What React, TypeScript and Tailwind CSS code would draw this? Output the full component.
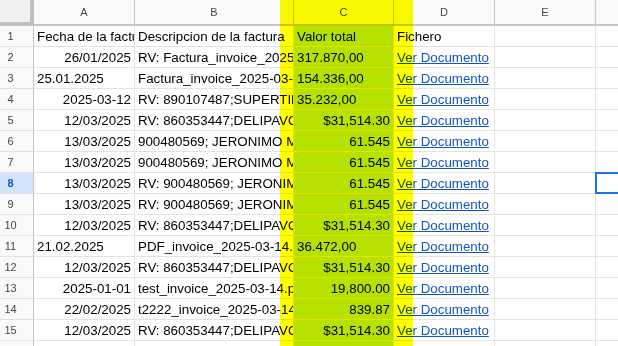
import React from "react";

type Align = "l" | "r";
type Row = { a: [string, Align]; b: string; c: [string, Align] };

const rows: Row[] = [
  { a: ["26/01/2025", "r"], b: "RV: Factura_invoice_2025-03-14.pdf", c: ["317.870,00", "l"] },
  { a: ["25.01.2025", "l"], b: "Factura_invoice_2025-03-14.pdf", c: ["154.336,00", "l"] },
  { a: ["2025-03-12", "r"], b: "RV: 890107487;SUPERTIENDAS Y DROGUERIAS", c: ["35.232,00", "l"] },
  { a: ["12/03/2025", "r"], b: "RV: 860353447;DELIPAVO S.A.S.", c: ["$31,514.30", "r"] },
  { a: ["13/03/2025", "r"], b: "900480569; JERONIMO MARTINS", c: ["61.545", "r"] },
  { a: ["13/03/2025", "r"], b: "900480569; JERONIMO MARTINS", c: ["61.545", "r"] },
  { a: ["13/03/2025", "r"], b: "RV: 900480569; JERONIMO MARTINS", c: ["61.545", "r"] },
  { a: ["13/03/2025", "r"], b: "RV: 900480569; JERONIMO MARTINS", c: ["61.545", "r"] },
  { a: ["12/03/2025", "r"], b: "RV: 860353447;DELIPAVO S.A.S.", c: ["$31,514.30", "r"] },
  { a: ["21.02.2025", "l"], b: "PDF_invoice_2025-03-14.pdf", c: ["36.472,00", "l"] },
  { a: ["12/03/2025", "r"], b: "RV: 860353447;DELIPAVO S.A.S.", c: ["$31,514.30", "r"] },
  { a: ["2025-01-01", "r"], b: "test_invoice_2025-03-14.pdf", c: ["19,800.00", "r"] },
  { a: ["22/02/2025", "r"], b: "t2222_invoice_2025-03-14.pdf", c: ["839.87", "r"] },
  { a: ["12/03/2025", "r"], b: "RV: 860353447;DELIPAVO S.A.S.", c: ["$31,514.30", "r"] },
];

const cellBase =
  "h-[21px] border-b border-r border-[#e2e3e3] flex items-end pb-[2px] px-[3px] overflow-hidden whitespace-nowrap leading-[15px] shrink-0";

function Txt({ t, align }: { t: string; align: Align }) {
  return (
    <span className={align === "r" ? "ml-auto" : ""}>{t}</span>
  );
}

function RowHeader({ n, active }: { n: number; active?: boolean }) {
  return (
    <div
      className={
        "w-[34px] h-[21px] shrink-0 border-b border-r border-[#c4c7c5] flex items-center text-[11px] " +
        (active ? "bg-[#d3e3fd] text-[#0b57d0] font-bold" : "bg-[#f8f9fa] text-[#444746]")
      }
      style={{ borderBottomColor: "#e1e3e1" }}
    >
      <span className="w-[21px] text-center">{n}</span>
    </div>
  );
}

export default function App() {
  const headerCell =
    "h-[26px] shrink-0 border-b-2 border-r border-[#c4c7c5] flex items-center justify-center text-[11px] text-[#444746] bg-[#f8f9fa]";
  return (
    <div
      className="relative w-[618px] h-[346px] overflow-hidden bg-white text-black text-[13.33px]"
      style={{ fontFamily: "'Liberation Sans', Arial, sans-serif" }}
    >
      {/* header */}
      <div className="flex">
        <div className="w-[34px] h-[26px] shrink-0 bg-[#efefef] border-r-4 border-b-4 border-[#c0c0c0]" />
        <div className={headerCell + " w-[101px]"}>A</div>
        <div className={headerCell + " w-[159px]"}>B</div>
        <div className={headerCell + " w-[100px]"}>C</div>
        <div className={headerCell + " w-[101px]"}>D</div>
        <div className={headerCell + " w-[101px]"}>E</div>
        <div className={headerCell + " w-[40px] bg-[#d3e3fd] text-[#0b57d0]"}></div>
      </div>

      {/* row 1 */}
      <div className="flex">
        <RowHeader n={1} />
        <div className={cellBase + " w-[101px]"}>Fecha de la factura</div>
        <div className={cellBase + " w-[159px]"}>Descripcion de la factura</div>
        <div className={cellBase + " w-[100px] bg-[#b7e1cd]"}>Valor total</div>
        <div className={cellBase + " w-[101px]"}>Fichero</div>
        <div className={cellBase + " w-[101px]"} />
        <div className={cellBase + " w-[40px]"} />
      </div>

      {rows.map((r, i) => {
        const n = i + 2;
        return (
          <div className="flex" key={n}>
            <RowHeader n={n} active={n === 8} />
            <div className={cellBase + " w-[101px]"}>
              <Txt t={r.a[0]} align={r.a[1]} />
            </div>
            <div className={cellBase + " w-[159px]"}>{r.b}</div>
            <div className={cellBase + " w-[100px] bg-[#b7e1cd]"}>
              <Txt t={r.c[0]} align={r.c[1]} />
            </div>
            <div className={cellBase + " w-[101px]"}>
              <span className="text-[#1155cc] underline">Ver Documento</span>
            </div>
            <div className={cellBase + " w-[101px]"} />
            <div className={cellBase + " w-[40px] relative overflow-visible"}>
              {n === 8 && (
                <div className="absolute left-[-1px] top-[-1px] w-[60px] h-[22px] border-2 border-[#1a73e8]" />
              )}
            </div>
          </div>
        );
      })}

      {/* row 16 */}
      <div className="flex">
        <RowHeader n={16} />
        <div className={cellBase + " w-[101px]"} />
        <div className={cellBase + " w-[159px]"} />
        <div className={cellBase + " w-[100px] bg-[#b7e1cd]"} />
        <div className={cellBase + " w-[101px]"} />
        <div className={cellBase + " w-[101px]"} />
        <div className={cellBase + " w-[40px]"} />
      </div>

      {/* yellow highlight annotation */}
      <div className="absolute left-[280px] top-0 w-[133px] h-[346px] bg-[#ffff00] mix-blend-multiply pointer-events-none" />
    </div>
  );
}
